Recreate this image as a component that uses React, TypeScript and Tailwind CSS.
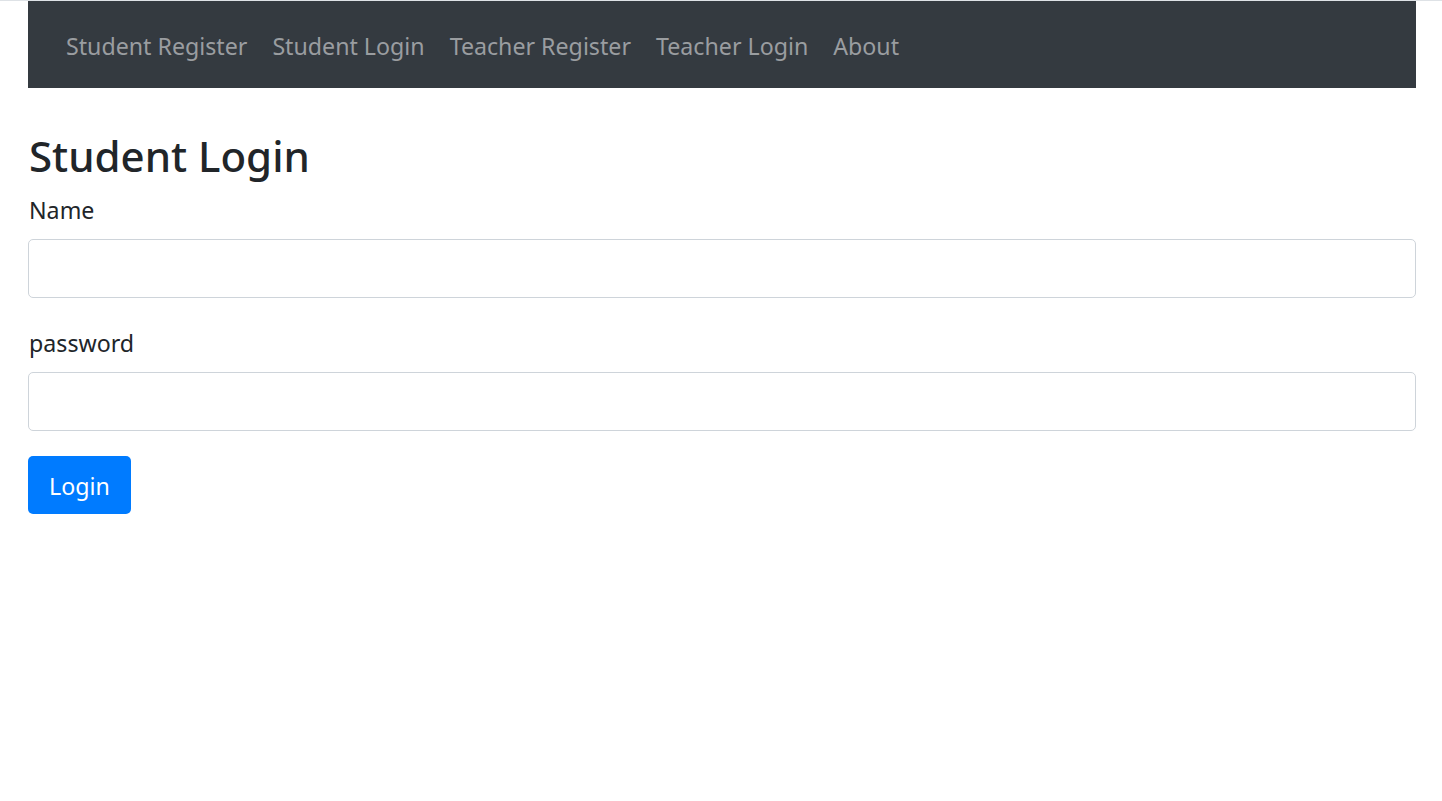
import React, { useState } from 'react'

const links = ['Student Register', 'Student Login', 'Teacher Register', 'Teacher Login', 'About']

export default function App() {
    const [name, setName] = useState('')
    const [password, setPassword] = useState('')

    return (
        <div className="min-h-[801px] bg-white border-t border-[#dee2e6] text-[#212529]" style={{ fontFamily: '"Noto Sans", "Open Sans", sans-serif' }}>
            <div className="pl-[28px] pr-[26px]">
                <nav className="bg-[#343a40] h-[87px] flex items-start pt-[28px] pl-[38px] gap-[25px]">
                    {links.map(link => (
                        <a key={link} href="#" className="text-[23.2px] leading-[1.5] text-[#9a9da0] hover:text-white">
                            {link}
                        </a>
                    ))}
                </nav>

                <h2 className="text-[42px] font-medium leading-[53px] mt-[41px] mb-[11px] pl-[1px]">Student Login</h2>

                <form onSubmit={e => e.preventDefault()}>
                    <div className="mb-[28px]">
                        <label className="block text-[23.2px] leading-[1.5] mb-[11px] pl-[1px]">Name</label>
                        <input
                            value={name}
                            onChange={e => setName(e.target.value)}
                            className="block w-full h-[59px] border border-[#ced4da] rounded-[5px] px-[18px] text-[23px] outline-none"
                        />
                    </div>
                    <div className="mb-[25px]">
                        <label className="block text-[23.2px] leading-[1.5] mb-[11px] pl-[1px]">password</label>
                        <input
                            type="password"
                            value={password}
                            onChange={e => setPassword(e.target.value)}
                            className="block w-full h-[59px] border border-[#ced4da] rounded-[5px] px-[18px] text-[23px] outline-none"
                        />
                    </div>
                    <button type="submit" className="bg-[#007bff] text-white text-[23.2px] h-[58px] pt-[3px] px-[21px] rounded-[5px]">
                        Login
                    </button>
                </form>
            </div>
        </div>
    )
}
